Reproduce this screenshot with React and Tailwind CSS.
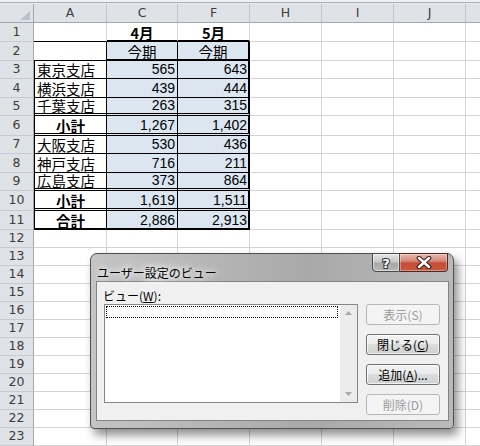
import React from 'react';

const JP = "font-['Noto_Sans_CJK_JP',sans-serif]";
const NUM = "font-['Liberation_Sans','Noto_Sans_CJK_JP',sans-serif]";
const HDR = "font-['DejaVu_Sans',sans-serif]";

const BOTTOM = {
  thin: 'border-b border-b-black pb-[1px]',
  double: 'border-b-[3px] border-double border-b-black pb-0',
  thick: 'border-b-2 border-b-black pb-0',
};

const rows = [
  { n: 1, h: 'h-[19px]', c: '4月', f: '5月' },
  { n: 2, h: 'h-[19px]', c: '今期', f: '今期' },
  { n: 3, h: 'h-[18px]', a: '東京支店', c: '565', f: '643', b: 'thin' },
  { n: 4, h: 'h-[19px]', a: '横浜支店', c: '439', f: '444', b: 'thin' },
  { n: 5, h: 'h-[18px]', a: '千葉支店', c: '263', f: '315', b: 'double' },
  { n: 6, h: 'h-[20px]', a: '小計', c: '1,267', f: '1,402', b: 'double', bold: true },
  { n: 7, h: 'h-[18px]', a: '大阪支店', c: '530', f: '436', b: 'thin' },
  { n: 8, h: 'h-[19px]', a: '神戸支店', c: '716', f: '211', b: 'thin' },
  { n: 9, h: 'h-[18px]', a: '広島支店', c: '373', f: '864', b: 'double' },
  { n: 10, h: 'h-[20px]', a: '小計', c: '1,619', f: '1,511', b: 'double', bold: true },
  { n: 11, h: 'h-[19px]', a: '合計', c: '2,886', f: '2,913', b: 'thick', bold: true },
];

const emptyRows = [12, 13, 14, 15, 16, 17, 18, 19, 20, 21, 22, 23];

function RowHead({ n }) {
  return (
    <div className={`w-[34px] shrink-0 flex items-center justify-center bg-[#dfe3e8] border-r border-r-[#9ea7b3] border-b border-b-[#c5cbd3] text-[12.5px] text-[#3c3c3c] ${HDR}`}>
      {n}
    </div>
  );
}

function GridTail() {
  return (
    <>
      <div className="w-[72px] shrink-0 border-r border-b border-[#d4d4d4]" />
      <div className="w-[72px] shrink-0 border-r border-b border-[#d4d4d4]" />
      <div className="w-[72px] shrink-0 border-r border-b border-[#d4d4d4]" />
      <div className="flex-1 border-b border-[#d4d4d4]" />
    </>
  );
}

function aClass(r) {
  const p = ['w-[73px] shrink-0 flex items-end leading-[15px] text-[14.5px] text-black', JP];
  if (r.n === 1) p.push('border-r border-r-[#d4d4d4] border-b border-b-black');
  else if (r.n === 2) p.push('border-r border-r-black border-b border-b-black');
  else {
    p.push('border-l border-l-black border-r border-r-black');
    p.push(BOTTOM[r.b]);
  }
  if (r.bold) p.push('justify-center font-bold');
  else p.push('justify-start pl-[2px]');
  return p.join(' ');
}

function valClass(r, col) {
  const p = ['shrink-0 flex items-end leading-[15px] text-black'];
  p.push(col === 'c' ? 'w-[71px]' : 'w-[72px]');
  if (r.n === 1) {
    p.push('border-r border-r-[#d4d4d4] border-b-2 border-b-black justify-center font-bold text-[14.5px] pb-0', JP);
  } else {
    p.push('bg-[#dce6f1]');
    p.push(col === 'c' ? 'border-r border-r-black' : 'border-r-2 border-r-black');
    if (r.n === 2) {
      p.push('border-b-2 border-b-black justify-center text-[14.5px] pb-0', JP);
    } else {
      p.push(BOTTOM[r.b], 'justify-end text-[14px]', NUM);
      p.push(col === 'c' ? 'pr-[2px]' : 'pr-[1px]');
    }
  }
  return p.join(' ');
}

function ColHead({ w, label }) {
  return (
    <div className={`${w} shrink-0 flex items-center justify-center bg-[#dfe3e8] border-r border-r-[#bfc5cd] border-b border-b-[#9ea7b3] text-[12.5px] text-[#3c3c3c] ${HDR}`}>
      {label}
    </div>
  );
}

function Sheet() {
  return (
    <div className="flex flex-col">
      <div className="h-[2px] bg-[#eef0f3]" />
      <div className="h-[1px] bg-[#a7afba]" />
      <div className="h-[1px] bg-[#e6e9ed]" />
      <div className="flex h-[19px]">
        <div className="relative w-[34px] shrink-0 bg-[#dfe3e8] border-r border-r-[#9ea7b3] border-b border-b-[#9ea7b3]">
          <svg className="absolute right-[3px] bottom-[2px]" width="10" height="9" viewBox="0 0 10 9">
            <polygon points="10,0 10,9 0,9" fill="#bcc2ca" />
          </svg>
        </div>
        <ColHead w="w-[73px]" label="A" />
        <ColHead w="w-[71px]" label="C" />
        <ColHead w="w-[72px]" label="F" />
        <ColHead w="w-[72px]" label="H" />
        <ColHead w="w-[72px]" label="I" />
        <ColHead w="w-[72px]" label="J" />
        <div className="flex-1 bg-[#dfe3e8] border-b border-b-[#9ea7b3]" />
      </div>
      {rows.map((r) => (
        <div key={r.n} className={`flex ${r.h}`}>
          <RowHead n={r.n} />
          <div className={aClass(r)}>{r.a}</div>
          <div className={valClass(r, 'c')}>{r.c}</div>
          <div className={valClass(r, 'f')}>{r.f}</div>
          <GridTail />
        </div>
      ))}
      {emptyRows.map((n) => (
        <div key={n} className="flex h-[18px]">
          <RowHead n={n} />
          <div className="w-[73px] shrink-0 border-r border-b border-[#d4d4d4]" />
          <div className="w-[71px] shrink-0 border-r border-b border-[#d4d4d4]" />
          <div className="w-[72px] shrink-0 border-r border-b border-[#d4d4d4]" />
          <GridTail />
        </div>
      ))}
    </div>
  );
}

function DlgButton({ children, disabled }) {
  return disabled ? (
    <div className={`h-[21px] w-[74px] flex items-center justify-center rounded-[3px] border border-[#b4b8bb] bg-[#f4f4f4] text-[12px] leading-none text-[#9a9a9a] ${JP}`}>
      {children}
    </div>
  ) : (
    <div className={`h-[21px] w-[74px] flex items-center justify-center rounded-[3px] border border-[#707070] bg-[linear-gradient(to_bottom,#f2f2f2_0%,#ebebeb_50%,#dddddd_50%,#cfcfcf_100%)] shadow-[inset_0_0_0_1px_rgba(255,255,255,0.7)] text-[12px] leading-none text-black ${JP}`}>
      {children}
    </div>
  );
}

function Dialog() {
  return (
    <div className="absolute left-[90px] top-[253px] w-[364px] h-[176px] flex flex-col rounded-t-[7px] rounded-b-[4px] border border-[#505050] bg-[linear-gradient(to_right,#c4c4c4_0%,#b2b2b2_40%,#a9a9a9_60%,#b9b9b9_100%)] shadow-[4px_6px_10px_rgba(0,0,0,0.45)]">
      <div className="relative h-[27px] shrink-0 pl-[6px] pt-[6px]">
        <span className={`text-[12px] leading-[14px] text-black [text-shadow:0_0_5px_#fff,0_0_9px_#fff,0_0_14px_#fff] ${JP}`}>
          ユーザー設定のビュー
        </span>
        <div className="absolute right-[5px] top-[-1px] flex">
          <div className="w-[28px] h-[19px] rounded-bl-[4px] border border-[#4a4a4a] bg-[linear-gradient(to_bottom,#e4e4e4_0%,#c9c9c9_45%,#a9a9a9_55%,#b5b5b5_100%)] shadow-[inset_0_0_0_1px_rgba(255,255,255,0.5)] flex items-center justify-center">
            <svg width="26" height="17" viewBox="0 0 26 17">
              <text x="13" y="14" textAnchor="middle" fontFamily="DejaVu Sans" fontWeight="bold" fontSize="13" fill="#ffffff" stroke="#3a3a3a" strokeWidth="2.2" paintOrder="stroke">?</text>
            </svg>
          </div>
          <div className="w-[48px] h-[19px] rounded-br-[4px] border border-l-0 border-[#4a2a25] bg-[linear-gradient(to_bottom,#e9b8ae_0%,#d88a7a_40%,#c64a35_55%,#c9583f_100%)] shadow-[inset_0_0_0_1px_rgba(255,255,255,0.35)] flex items-center justify-center">
            <svg width="16" height="13" viewBox="0 0 16 13">
              <path d="M3 2 L13 11 M13 2 L3 11" stroke="#3b2320" strokeWidth="4.6" strokeLinecap="round" />
              <path d="M3 2 L13 11 M13 2 L3 11" stroke="#ffffff" strokeWidth="2.4" strokeLinecap="round" />
            </svg>
          </div>
        </div>
      </div>
      <div className="ml-[5px] mr-[4px] mb-[7px] flex-1 border border-[#838383] bg-[#f0f0f0] flex flex-col">
        <div className={`pl-[6px] pt-[6px] h-[22px] text-[12px] leading-[16px] text-black ${JP}`}>
          ビュー(<span className="underline underline-offset-1">W</span>):
        </div>
        <div className="flex">
          <div className="ml-[7px] w-[254px] h-[99px] border border-[#828790] bg-white flex">
            <div className="flex-1 pl-[1px] pt-[1px]">
              <div className="w-[232px] h-[12px] border border-dotted border-black" />
            </div>
            <div className="w-[17px] bg-[#ececec] flex flex-col justify-between items-center py-[6px]">
              <svg width="7" height="4" viewBox="0 0 7 4"><polygon points="3.5,0 7,4 0,4" fill="#a8a8a8" /></svg>
              <svg width="7" height="4" viewBox="0 0 7 4"><polygon points="0,0 7,0 3.5,4" fill="#a8a8a8" /></svg>
            </div>
          </div>
          <div className="ml-[8px] flex flex-col gap-[9px]">
            <DlgButton disabled>表示(S)</DlgButton>
            <DlgButton>閉じる(<span className="underline underline-offset-1">C</span>)</DlgButton>
            <DlgButton>追加(<span className="underline underline-offset-1">A</span>)...</DlgButton>
            <DlgButton disabled>削除(D)</DlgButton>
          </div>
        </div>
      </div>
    </div>
  );
}

export default function App() {
  return (
    <div className="relative w-[480px] h-[446px] overflow-hidden bg-white">
      <Sheet />
      <Dialog />
    </div>
  );
}
